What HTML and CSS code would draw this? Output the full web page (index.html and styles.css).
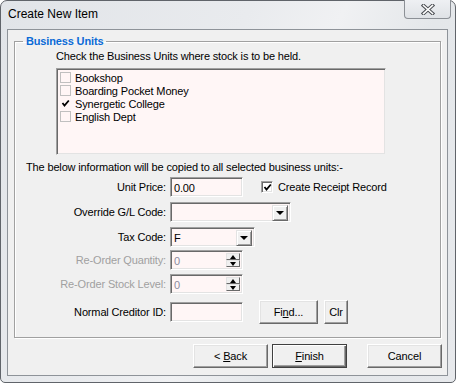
FILE: index.html
```html
<!DOCTYPE html>
<html lang="en">
<head>
  <meta charset="UTF-8" />
  <title>Create New Item</title>
  <link rel="stylesheet" href="styles.css">
</head>
<body>
  <div class="window">
    <div class="titlebar">
      <span class="title">Create New Item</span>
      <button class="close" title="Close">
        <svg width="14" height="11" viewBox="0 0 14 11">
          <path d="M2.5 1.5 L11.5 9.5 M11.5 1.5 L2.5 9.5" stroke="#4a4d52" stroke-width="3.6" stroke-linecap="square"/>
          <path d="M2.5 1.5 L11.5 9.5 M11.5 1.5 L2.5 9.5" stroke="#fff" stroke-width="1.6" stroke-linecap="square"/>
        </svg>
      </button>
    </div>

    <div class="client">
      <fieldset class="group">
        <legend>Business Units</legend>
        <p class="hint">Check the Business Units where stock is to be held.</p>
        <ul class="units">
          <li><span class="cb"></span>Bookshop</li>
          <li><span class="cb"></span>Boarding Pocket Money</li>
          <li><span class="cb checked"><svg width="9" height="9" viewBox="0 0 9 9"><path d="M1.5 4 L3.5 6.5 L7.8 1.5" fill="none" stroke="#000" stroke-width="1.8"/></svg></span>Synergetic College</li>
          <li><span class="cb"></span>English Dept</li>
        </ul>
        <p class="note">The below information will be copied to all selected business units:-</p>

        <div class="row r1">
          <label>Unit Price:</label>
          <div class="field w73"><span class="val">0.00</span></div>
          <span class="cb3d"><svg width="9" height="9" viewBox="0 0 9 9"><path d="M1.5 4 L3.5 6.5 L7.8 1.5" fill="none" stroke="#000" stroke-width="1.8"/></svg></span>
          <span class="cb-label">Create Receipt Record</span>
        </div>
        <div class="row r2">
          <label>Override G/L Code:</label>
          <div class="field combo w121"><span class="val"></span><span class="drop"><i class="down"></i></span></div>
        </div>
        <div class="row r3">
          <label>Tax Code:</label>
          <div class="field combo w85"><span class="val">F</span><span class="drop"><i class="down"></i></span></div>
        </div>
        <div class="row r4 disabled">
          <label>Re-Order Quantity:</label>
          <div class="field spin w73"><span class="val">0</span><span class="spins"><span><i class="up"></i></span><span><i class="down"></i></span></span></div>
        </div>
        <div class="row r5 disabled">
          <label>Re-Order Stock Level:</label>
          <div class="field spin w73"><span class="val">0</span><span class="spins"><span><i class="up"></i></span><span><i class="down"></i></span></span></div>
        </div>
        <div class="row r6">
          <label>Normal Creditor ID:</label>
          <div class="field w73"><span class="val"></span></div>
          <button class="btn find">Fi<u>n</u>d...</button>
          <button class="btn clr">Clr</button>
        </div>
      </fieldset>

      <div class="actions">
        <button class="btn wide">&lt; <u>B</u>ack</button>
        <button class="btn wide default"><u>F</u>inish</button>
        <button class="btn wide cancel">Cancel</button>
      </div>
    </div>
  </div>
</body>
</html>
```
FILE: styles.css
```css
* {
  box-sizing: border-box;
  margin: 0;
  padding: 0;
}
body {
  font-family: 'Liberation Sans', Arial, sans-serif;
  font-size: 11px;
  letter-spacing: -0.15px;
  color: #000;
  background: #fff;
}
.window {
  width: 456px;
  height: 383px;
  border: 1px solid #60646a;
  border-radius: 7px 7px 5px 5px;
  padding: 0 7px 6px 6px;
  background: linear-gradient(115deg, #e1e4e8 0%, #e9ebee 40%, #f0f1f3 55%, #e4e7ea 70%, #e7e9ec 100%);
  display: flex;
  flex-direction: column;
}
.titlebar {
  height: 28px;
  display: flex;
  justify-content: space-between;
  align-items: flex-start;
}
.title {
  font-size: 12px;
  letter-spacing: 0;
  line-height: 15px;
  margin-top: 6px;
  padding-left: 1px;
}
.close {
  width: 47px;
  height: 19px;
  margin-top: -1px;
  margin-right: -3px;
  border: 1px solid #8c9096;
  border-top: none;
  border-radius: 0 0 4px 4px;
  background: linear-gradient(#eef0f3, #dfe2e6);
  display: flex;
  justify-content: center;
  align-items: center;
}
.client {
  flex: 1;
  border: 1px solid #8e9399;
  background: #f0f0f0;
}
.group {
  margin: 4px 6px 0;
  padding: 0 0 13px;
  border: 1px solid #a0a0a0;
  box-shadow: inset 1px 1px 0 #fff, 1px 1px 0 #fff;
}
.group legend {
  margin-left: 8px;
  padding: 0 3px;
  font-weight: bold;
  color: #0a6ad6;
  line-height: 14px;
}
.hint {
  line-height: 14px;
  margin-top: 1px;
  padding-left: 41px;
}
.units {
  list-style: none;
  margin: 5px 0 0 41px;
  width: 330px;
  height: 87px;
  background: #fff6f6;
  border: 1px solid;
  border-color: #a0a0a0 #f0f0f0 #f0f0f0 #a0a0a0;
  box-shadow: inset 1px 1px 0 #696969, inset -1px -1px 0 #e3e3e3;
  padding: 2px 0 0 3px;
}
.units li {
  display: flex;
  align-items: center;
  height: 13px;
}
.cb {
  width: 11px;
  height: 11px;
  margin-right: 4px;
  border: 1px solid #c0c0c0;
  background: #fff6f6;
  display: flex;
  justify-content: center;
  align-items: center;
}
.cb.checked {
  border-color: transparent;
}
.note {
  line-height: 14px;
  margin-top: 5px;
  padding-left: 11px;
}
.row {
  display: flex;
  align-items: center;
  height: 20px;
}
.r1 { margin-top: 3px; }
.r2 { margin-top: 5px; }
.r3 { margin-top: 5px; }
.r4 { margin-top: 3px; }
.r5 { margin-top: 4px; }
.r6 { margin-top: 6px; height: 24px; }
.row label {
  width: 151px;
  text-align: right;
  margin-right: 4px;
}
.disabled label {
  color: #a0a0a0;
}
.disabled .val {
  color: #8c8aa0;
}
.field {
  height: 20px;
  display: flex;
  background: #fff6f6;
  border: 1px solid;
  border-color: #a0a0a0 #fff #fff #a0a0a0;
  box-shadow: inset 1px 1px 0 #696969, inset -1px -1px 0 #e3e3e3;
  padding: 2px;
}
.w73 { width: 73px; }
.w85 { width: 85px; }
.w121 { width: 121px; }
.val {
  flex: 1;
  line-height: 16px;
  padding-left: 1px;
}
.drop {
  width: 16px;
  height: 16px;
  background: #f0f0f0;
  border: 1px solid;
  border-color: #e3e3e3 #696969 #696969 #e3e3e3;
  box-shadow: inset 1px 1px 0 #fff, inset -1px -1px 0 #a0a0a0;
  display: flex;
  justify-content: center;
  align-items: center;
}
.down, .up {
  width: 0;
  height: 0;
  border-left: 4px solid transparent;
  border-right: 4px solid transparent;
}
.down { border-top: 4px solid #000; }
.up { border-bottom: 4px solid #000; }
.spins {
  width: 14px;
  display: flex;
  flex-direction: column;
}
.spins span {
  flex: 1;
  background: #f0f0f0;
  border: 1px solid;
  border-color: #e3e3e3 #696969 #696969 #e3e3e3;
  display: flex;
  justify-content: center;
  align-items: center;
}
.spins .up, .spins .down {
  border-left-width: 3.5px;
  border-right-width: 3.5px;
}
.cb3d {
  width: 12px;
  height: 12px;
  margin-left: 18px;
  margin-right: 5px;
  background: #fff;
  border: 1px solid;
  border-color: #a0a0a0 #fff #fff #a0a0a0;
  box-shadow: inset 1px 1px 0 #696969, inset -1px -1px 0 #e3e3e3;
  display: flex;
  justify-content: center;
  align-items: center;
}
.btn {
  font-family: inherit;
  font-size: 11px;
  letter-spacing: -0.15px;
  color: #000;
  height: 24px;
  background: #f0f0f0;
  border: 1px solid;
  border-color: #fff #696969 #696969 #fff;
  box-shadow: inset -1px -1px 0 #a0a0a0, inset 1px 1px 0 #e3e3e3;
}
.find {
  width: 59px;
  margin-left: 16px;
}
.clr {
  width: 24px;
  margin-left: 6px;
}
.actions {
  display: flex;
  justify-content: flex-end;
  margin-top: 6px;
  padding-right: 5px;
}
.wide {
  width: 75px;
  height: 24px;
}
.default {
  margin-left: 4px;
  border: 1px solid #404040;
  box-shadow: inset 1px 1px 0 #fff, inset -1px -1px 0 #696969, inset -2px -2px 0 #a0a0a0;
}
.cancel {
  margin-left: 20px;
}
```
